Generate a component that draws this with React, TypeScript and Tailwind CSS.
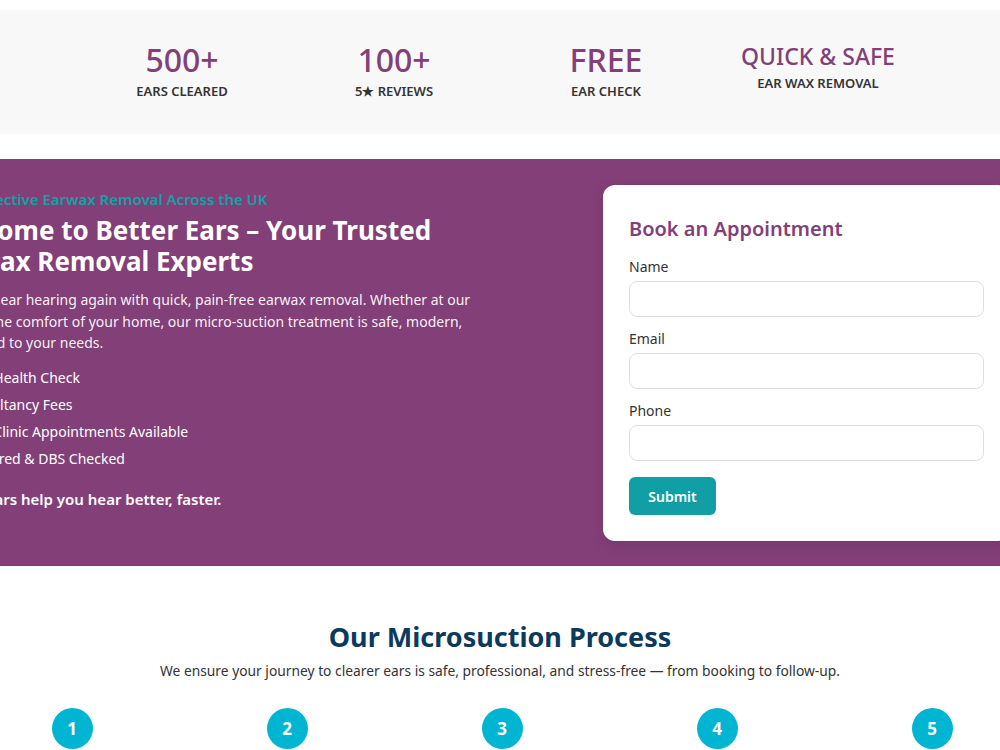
import { useState } from 'react';

const stats = [
  { value: '500+', label: 'Ears Cleared', small: false },
  { value: '100+', label: '5★ Reviews', small: false },
  { value: 'FREE', label: 'Ear Check', small: false },
  { value: 'QUICK & SAFE', label: 'Ear Wax Removal', small: true },
];

const perks = [
  'Free Ear Health Check',
  'No Consultancy Fees',
  'Home & Clinic Appointments Available',
  'Fully Insured & DBS Checked',
];

const steps = [1, 2, 3, 4, 5];

function Field({ label, type = 'text' }: { label: string; type?: string }) {
  const [value, setValue] = useState('');
  return (
    <label className="block">
      <span className="block text-[14px] leading-[20px] text-[#333]">{label}</span>
      <input
        type={type}
        value={value}
        onChange={(e) => setValue(e.target.value)}
        className="mt-[4px] block h-[36px] w-full rounded-[8px] border border-[#dedede] bg-white px-3 text-[14px] outline-none"
      />
    </label>
  );
}

export default function App() {
  return (
    <div className="min-h-screen overflow-hidden bg-white font-['Noto_Sans',sans-serif]">
      {/* 统计条 */}
      <section className="mt-[10px] h-[124px] bg-[#f8f8f8] pt-[31px]">
        <div className="mx-auto grid w-[848px] grid-cols-4 items-start">
          {stats.map((s) => (
            <div key={s.label} className="text-center">
              <div
                className={`font-medium text-[#82407b] ${
                  s.small ? 'text-[23px] leading-[30px]' : 'text-[32px] leading-[38px]'
                }`}
              >
                {s.value}
              </div>
              <div className="mt-[3px] text-[13px] font-semibold uppercase leading-[18px] text-[#333]">
                {s.label}
              </div>
            </div>
          ))}
        </div>
      </section>

      {/* 主视觉 + 预约表单 */}
      <section className="mt-[25px] flex h-[407px] justify-center bg-[#833f78]">
        <div className="flex w-[1140px] shrink-0 items-start gap-[60px] pt-[26px] pl-[6px] pr-[60px]">
          <div className="flex-1 pt-[4px] text-white">
            <p className="text-[15px] font-semibold leading-[20px] text-[#15a2a4]">
              Safe, Effective Earwax Removal Across the UK
            </p>
            <h1 className="mt-[6px] text-[26px] font-bold leading-[31px]">
              Welcome to Better Ears – Your Trusted
              <br />
              Earwax Removal Experts
            </h1>
            <p className="mt-[12px] w-[545px] text-[14px] leading-[21.5px] text-white/95">
              Achieve clear hearing again with quick, pain-free earwax removal. Whether at our
              clinic or the comfort of your home, our micro-suction treatment is safe, modern,
              and suited to your needs.
            </p>
            <ul className="mt-[13px] space-y-[6px]">
              {perks.map((p) => (
                <li key={p} className="text-[14px] leading-[21px]">
                  {p}
                </li>
              ))}
            </ul>
            <p className="mt-[20px] text-[15px] font-semibold leading-[20px]">
              Better Ears help you hear better, faster.
            </p>
          </div>

          <form
            onSubmit={(e) => e.preventDefault()}
            className="w-[407px] shrink-0 rounded-[12px] bg-white px-[26px] pt-[30px] pb-[26px] shadow-[0_4px_14px_rgba(0,0,0,0.12)]"
          >
            <h2 className="text-[20px] font-semibold leading-[28px] text-[#82407b]">
              Book an Appointment
            </h2>
            <div className="mt-[14px] space-y-[12px]">
              <Field label="Name" />
              <Field label="Email" type="email" />
              <Field label="Phone" type="tel" />
            </div>
            <button
              type="submit"
              className="mt-[16px] h-[38px] w-[87px] rounded-[6px] bg-[#119ea5] text-[14px] font-semibold text-white"
            >
              Submit
            </button>
          </form>
        </div>
      </section>

      {/* 流程 */}
      <section className="pt-[53px]">
        <h2 className="text-center text-[27px] font-bold leading-[36px] text-[#0c3a5c]">
          Our Microsuction Process
        </h2>
        <p className="mt-[6px] text-center text-[13.8px] leading-[20px] text-[#333]">
          We ensure your journey to clearer ears is safe, professional, and stress-free — from booking to follow-up.
        </p>
        <div className="flex justify-center">
          <div className="ml-[4px] mt-[27px] grid w-[1075px] shrink-0 grid-cols-5">
            {steps.map((n) => (
              <div key={n} className="flex justify-center">
                <span className="flex h-[41px] w-[41px] items-center justify-center rounded-full bg-[#00b5d1] text-[17px] font-bold text-white">
                  {n}
                </span>
              </div>
            ))}
          </div>
        </div>
      </section>
    </div>
  );
}
